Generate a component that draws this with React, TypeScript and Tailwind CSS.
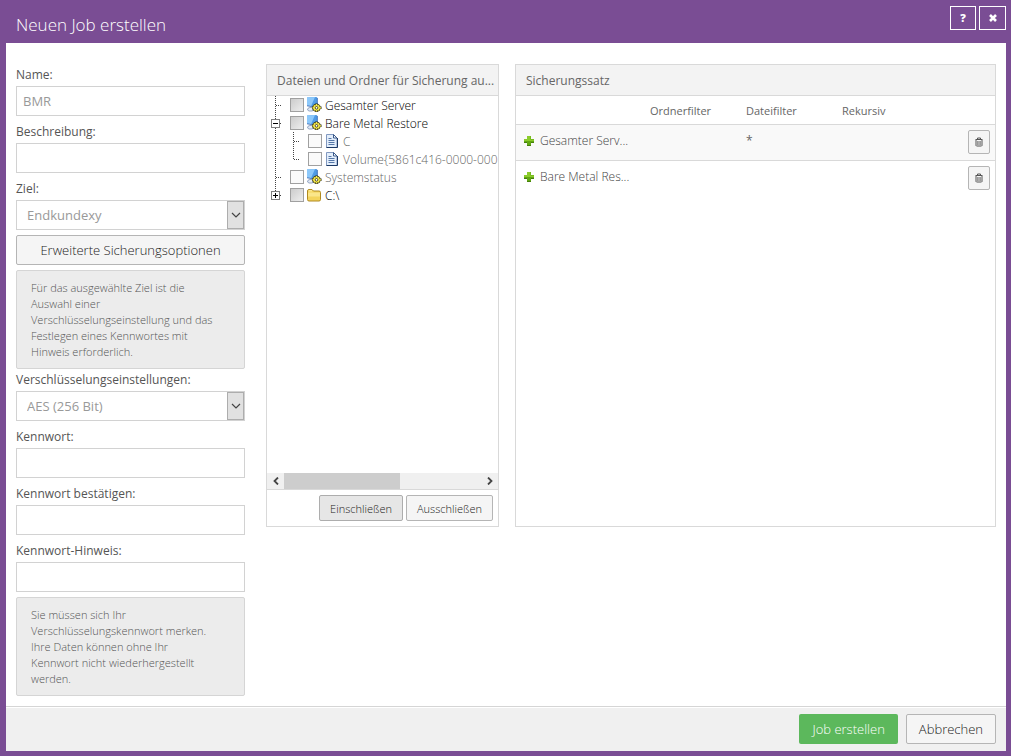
import React from "react";

type NodeIcon = "server" | "page" | "folder";

interface TreeNode {
	id: string;
	name: string;
	level: number;
	icon: NodeIcon;
	line: "tee" | "minus" | "plus";
	muted?: boolean;
	partial?: boolean;
}

const treeNodes: TreeNode[] = [
	{ id: "server", name: "Gesamter Server", level: 0, icon: "server", line: "tee", partial: true },
	{ id: "bmr", name: "Bare Metal Restore", level: 0, icon: "server", line: "minus", partial: true },
	{ id: "c", name: "C", level: 1, icon: "page", line: "tee", muted: true },
	{
		id: "volume",
		name: "Volume{5861c416-0000-000",
		level: 1,
		icon: "page",
		line: "tee",
		muted: true,
	},
	{ id: "state", name: "Systemstatus", level: 0, icon: "server", line: "tee", muted: true },
	{ id: "drive", name: "C:\\", level: 0, icon: "folder", line: "plus", partial: true },
];

const backupSet = [
	{ id: "1", name: "Gesamter Serv...", folderFilter: "", fileFilter: "*", recursive: "" },
	{ id: "2", name: "Bare Metal Res...", folderFilter: "", fileFilter: "", recursive: "" },
];

const ServerIcon = () => (
	<svg className="h-4 w-4 shrink-0" viewBox="0 0 16 16" aria-hidden="true">
		<path d="M1 .5 10.500 0l1 1v8L9 10 1 8.500z" fill="#4f9be6" />
		<path d="M1 .5 9 0 5 9.200 1 8.500z" fill="#8cc8fa" />
		<path d="M11.300 1V7M1 8.800l6 1" stroke="#3a66b0" strokeWidth="0.800" />
		<path d="M1.500 13q0-2.500 2.500-2.500h2.500v3.500H3z" fill="#e4ebf5" stroke="#7e93b8" strokeWidth="0.8" />
		<path
			d="M10.500 6.500v8.500M6 10.800h9.500M7.500 8l6 5.600M13.500 8l-6 5.600"
			stroke="#2c2a10"
			strokeWidth="2.600"
		/>
		<ellipse cx="10.500" cy="10.800" rx="3.800" ry="3.200" fill="#f5ea4c" stroke="#2c2a10" strokeWidth="0.700" />
		<path
			d="M10.500 7v7.600M6.500 10.800h8.500M8 8.400l5 4.800M13 8.400l-5 4.800"
			stroke="#f5ea4c"
			strokeWidth="1.200"
		/>
		<circle cx="10.500" cy="10.800" r="1.300" fill="#fff" stroke="#2c2a10" strokeWidth="0.8" />
	</svg>
);

const PageIcon = () => (
	<svg className="h-4 w-4 shrink-0" viewBox="0 0 16 16" aria-hidden="true">
		<path d="M2.500 1.500h7l3.500 3.500v9.500H2.500z" fill="#e3eefb" stroke="#8299c0" />
		<path d="M9.500 1.500V5H13z" fill="#fff" stroke="#3a5a8c" />
		<path d="M4.500 5.500h3M4.500 7.500h6M4.500 9.500h6M4.500 11.500h6" stroke="#5577a8" />
		<path d="M13.500 5v9.500H2.500" fill="none" stroke="#1d3a66" />
	</svg>
);

const FolderIcon = () => (
	<svg className="h-4 w-4 shrink-0" viewBox="0 0 16 16" aria-hidden="true">
		<path
			d="M1.500 4q0-1.500 1.500-1.500h3L7.500 4h5.500q1.500 0 1.500 1.500v7q0 1.500-1.500 1.500H3q-1.500 0-1.500-1.500z"
			fill="#f4d45c"
			stroke="#b08a20"
		/>
		<path d="M2 5.500h12v4H2z" fill="#fbe68a" />
		<path d="M2.500 3.800h3.500" stroke="#fdf0a8" />
	</svg>
);

const PlusIcon = () => (
	<svg className="h-3 w-3 shrink-0" viewBox="0 0 12 12" aria-hidden="true">
		<path d="M4 1h4v3h3v4H8v3H4V8H1V4h3z" fill="#62a812" />
		<path d="M4 1h3.500v3.500H11V6H1V4h3z" fill="#8bcb2c" />
		<path d="M4 10h4v1H4zM8 7h3v1H8zM1 7h3v1H1z" fill="#45800c" />
	</svg>
);

const TrashIcon = () => (
	<svg className="h-3 w-3" viewBox="0 0 12 12" fill="none" stroke="#555" aria-hidden="true">
		<path d="M4.500 3V2h3v1M2.500 3.500h7M3 4v5.500l.5.500h5l.5-.500V4" />
		<path d="M4.700 5v4M6 5v4M7.300 5v4" strokeWidth="0.700" />
	</svg>
);

const nodeIcons = { server: ServerIcon, page: PageIcon, folder: FolderIcon };

// One 18px cell of the connector lines, with the expander box where there is one
const TreeLine = ({ line, half }: { line: TreeNode["line"] | "bar"; half?: boolean }) => (
	<svg
		className="h-[18px] w-[18px] shrink-0"
		viewBox="0 0 18 18"
		fill="none"
		shapeRendering="crispEdges"
		aria-hidden="true"
	>
		<path d={half ? "M8.500 0v10" : "M8.500 0v18"} stroke="#444" strokeDasharray="1 1" />
		{line !== "bar" && <path d="M9 9.500h6" stroke="#444" strokeDasharray="1 1" />}
		{(line === "minus" || line === "plus") && (
			<>
				<path d="M4.500 5.500h8v8h-8z" fill="#fff" stroke="#808080" />
				<path d="M6 9.500h5" stroke="#000" />
			</>
		)}
		{line === "plus" && <path d="M8.500 7v5" stroke="#000" />}
	</svg>
);

const fieldClass =
	"h-[30px] w-full border border-[#d2d2d2] bg-white px-1.5 text-[13px] text-[#999] outline-none";
const labelClass = "block h-[22px] text-xs leading-[22px] text-[#555]";
const plainButton = "rounded-xs border border-[#b5b5b5] bg-[#f5f5f5] font-light text-[#222]";
const panelTitle = "truncate border-b border-[#d9d9d9] bg-[#f3f3f3] pt-0.5 pl-2.5 text-xs leading-7 text-[#666]";

const TextField = ({ id, label, value, type = "text" }: { id: string; label: string; value?: string; type?: string }) => (
	<div className="mb-[5px]">
		<label htmlFor={id} className={labelClass}>
			{label}
		</label>
		<input id={id} type={type} defaultValue={value} className={fieldClass} />
	</div>
);

const SelectField = ({ id, label, options }: { id: string; label: string; options: string[] }) => (
	<div className="mb-[5px]">
		<label htmlFor={id} className={labelClass}>
			{label}
		</label>
		<div className="relative">
			<select id={id} className="h-[30px] w-full appearance-none border border-[#d2d2d2] bg-white px-2.5 pt-px text-[13px] text-[#999] outline-none">
				{options.map((option) => (
					<option key={option}>{option}</option>
				))}
			</select>
			<span className="pointer-events-none absolute inset-y-px right-px flex w-[17px] items-center justify-center border border-[#adadad] bg-[#e1e1e1]">
				<svg className="h-2 w-2.5 shrink-0" viewBox="0 0 10 8" fill="none" stroke="#444" strokeWidth="1.200" aria-hidden="true">
					<path d="M1 2l4 4 4-4" />
				</svg>
			</span>
		</div>
	</div>
);

const Note = ({ children }: { children: React.ReactNode }) => (
	<p className="rounded-xs border border-[#d5d5d5] bg-[#ececec] pt-[9px] pr-7 pb-2 pl-3.5 text-[11px] leading-4 font-light text-[#555]">
		{children}
	</p>
);

const App: React.FC = () => {
	return (
		<div className="flex min-h-screen flex-col bg-[#7a4d94] pr-[5px] pb-[5px] pl-1.5 font-['Open_Sans',sans-serif]">
			{/* Title bar */}
			<header className="flex h-[43px] shrink-0 items-start justify-between pt-1.5 pl-2.5">
				<h1 className="pt-[7px] text-[17px] leading-6 font-light text-white">Neuen Job erstellen</h1>
				<div className="flex gap-[3px]">
					<button type="button" aria-label="Hilfe" className="h-6 w-[26px] border border-white text-[11px] font-extrabold text-white">
						?
					</button>
					<button type="button" aria-label="Schließen" className="flex h-6 w-[27px] items-center justify-center border border-white">
						<svg className="h-2 w-2" viewBox="0 0 8 8" stroke="#fff" strokeWidth="2.600" aria-hidden="true">
							<path d="M1 1l6 6M7 1L1 7" />
						</svg>
					</button>
				</div>
			</header>

			<main className="flex grow items-start bg-white px-2.5 pt-[21px] pb-2.5">
				{/* Job settings */}
				<form className="mr-[21px] w-[229px] shrink-0">
					<TextField id="name" label="Name:" value="BMR" />
					<TextField id="description" label="Beschreibung:" />
					<SelectField id="target" label="Ziel:" options={["Endkundexy"]} />
					<button type="button" className={`${plainButton} mb-[5px] h-[30px] w-full pt-px text-[13px]`}>
						Erweiterte Sicherungsoptionen
					</button>
					<Note>
						Für das ausgewählte Ziel ist die Auswahl einer Verschlüsselungseinstellung und das
						Festlegen eines Kennwortes mit Hinweis erforderlich.
					</Note>
					<SelectField id="encryption" label="Verschlüsselungseinstellungen:" options={["AES (256 Bit)"]} />
					<TextField id="password" label="Kennwort:" type="password" />
					<TextField id="confirm" label="Kennwort bestätigen:" type="password" />
					<TextField id="hint" label="Kennwort-Hinweis:" />
					<Note>
						Sie müssen sich Ihr Verschlüsselungskennwort merken. Ihre Daten können ohne Ihr
						Kennwort nicht wiederhergestellt werden.
					</Note>
				</form>

				<div className="flex min-w-0 grow gap-4">
					{/* File tree */}
					<section className="w-[233px] shrink-0 border border-[#d9d9d9]">
						<h2 className={panelTitle}>Dateien und Ordner für Sicherung au...</h2>
						<ul className="h-[377px] overflow-hidden text-xs">
							{treeNodes.map((node, index) => {
								const Icon = nodeIcons[node.icon];
								return (
									<li key={node.id} className="flex h-[18px] items-center">
										{node.level === 1 && <TreeLine line="bar" />}
										<TreeLine
											line={node.line}
											half={index === treeNodes.length - 1 || node.id === "volume"}
										/>
										<input
											id={node.id}
											type="checkbox"
											className={`mr-0.5 ml-[5px] h-3.5 w-3.5 shrink-0 appearance-none border border-[#a0a0a0] ${
												node.partial ? "bg-linear-to-br from-[#ccc] to-[#eee]" : "bg-[#fafafa]"
											}`}
										/>
										<Icon />
										<label
											htmlFor={node.id}
											className={`pt-0.5 pl-[3px] font-light whitespace-nowrap ${node.muted ? "text-[#666]" : "text-black"}`}
										>
											{node.name}
										</label>
									</li>
								);
							})}
						</ul>
						<div className="flex h-[17px] border-b border-[#d9d9d9] bg-[#f0f0f0]">
							<button type="button" aria-label="Nach links" className="flex w-[17px] items-center justify-center">
								<svg className="h-2 w-2" viewBox="0 0 8 8" fill="none" stroke="#444" strokeWidth="1.800" aria-hidden="true">
									<path d="M6 0.500L2.500 4 6 7.500" />
								</svg>
							</button>
							<div className="grow">
								<div className="h-full w-[59%] bg-[#cdcdcd]" />
							</div>
							<button type="button" aria-label="Nach rechts" className="flex w-[17px] items-center justify-center">
								<svg className="h-2 w-2" viewBox="0 0 8 8" fill="none" stroke="#444" strokeWidth="1.800" aria-hidden="true">
									<path d="M2 0.500L5.500 4 2 7.500" />
								</svg>
							</button>
						</div>
						<div className="flex justify-end gap-[3px] p-[5px]">
							<button type="button" className="h-[26px] rounded-xs border border-[#adadad] bg-[#e6e6e6] px-2.5 pt-0.5 text-[11px] font-light text-[#222]">
								Einschließen
							</button>
							<button type="button" className={`${plainButton} h-[26px] px-2.5 pt-0.5 text-[11px]`}>
								Ausschließen
							</button>
						</div>
					</section>

					{/* Backup set */}
					<section className="min-w-0 grow border border-[#d9d9d9]">
						<h2 className={panelTitle}>Sicherungssatz</h2>
						<table className="w-full table-fixed text-left text-[#666]">
							<thead className="text-[11px]">
								<tr className="h-7 border-b border-[#d9d9d9]">
									<th className="w-[124px]" aria-label="Name" />
									<th className="w-24 pt-0.5 pl-2.5 font-normal">Ordnerfilter</th>
									<th className="w-24 pt-0.5 pl-2.5 font-normal">Dateifilter</th>
									<th className="w-24 pt-0.5 pl-2.5 font-normal">Rekursiv</th>
									<th aria-label="Aktion" />
								</tr>
							</thead>
							<tbody className="text-xs">
								{backupSet.map((item) => (
									<tr key={item.id} className="h-9 align-top odd:border-b odd:border-[#d9d9d9] odd:bg-[#f9f9f9]">
										<td className="pt-1.5 pl-[7px] font-light whitespace-nowrap">
											<div className="flex items-center gap-[5px] leading-5 text-[#444]">
												<PlusIcon />
												{item.name}
											</div>
										</td>
										<td className="pt-1.5 pl-2.5 leading-5">{item.folderFilter}</td>
										<td className="pt-1.5 pl-2.5 leading-5">{item.fileFilter}</td>
										<td className="pt-1.5 pl-2.5 leading-5">{item.recursive}</td>
										<td className="pt-[5px] pr-[5px]">
											<button type="button" aria-label="Entfernen" className={`${plainButton} ml-auto flex h-6 w-[22px] items-center justify-center`}>
												<TrashIcon />
											</button>
										</td>
									</tr>
								))}
							</tbody>
						</table>
					</section>
				</div>
			</main>

			<footer className="border-t border-[#d5d5d5] bg-white pt-px">
				<div className="flex justify-end gap-2 bg-[#f0f0f0] px-2.5 pt-1.5 pb-[7px]">
					<button type="button" className="h-[30px] rounded-xs bg-[#5cb85c] px-[13px] pt-px text-[13px] font-light text-white">
						Job erstellen
					</button>
					<button type="button" className={`${plainButton} h-[30px] px-3 pt-px text-[13px]`}>
						Abbrechen
					</button>
				</div>
			</footer>
		</div>
	);
};

export default App;
